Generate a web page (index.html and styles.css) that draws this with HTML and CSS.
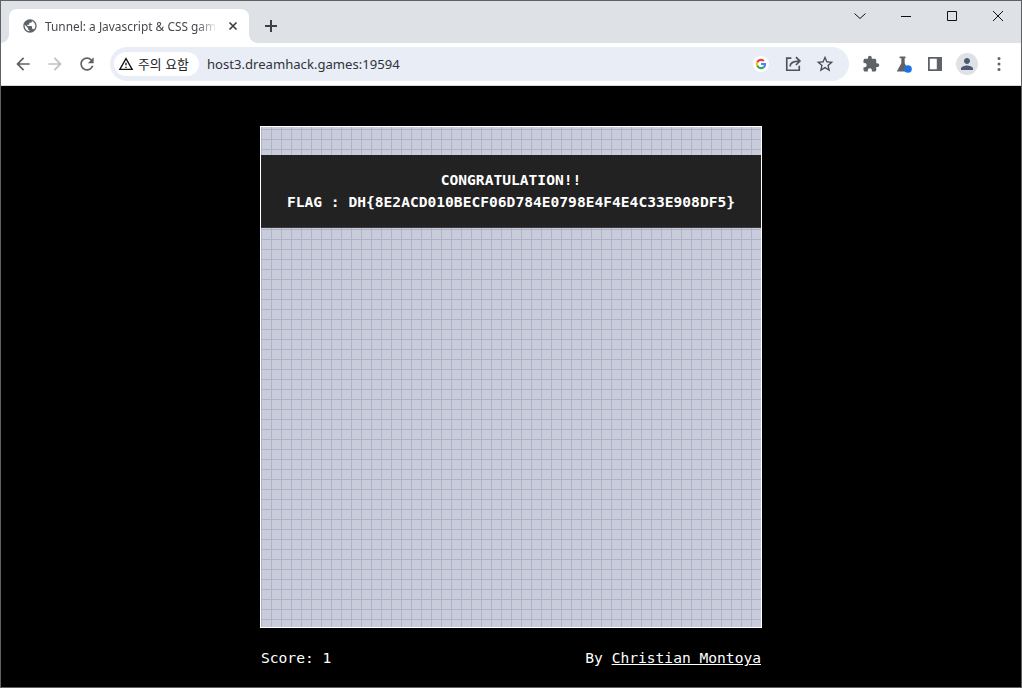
FILE: index.html
```html
<!DOCTYPE html>
<html lang="ko">
<head>
<meta charset="utf-8">
<title>Tunnel: a Javascript &amp; CSS game</title>
<link rel="stylesheet" href="styles.css">
</head>
<body>
<div class="window">
  <header class="tabstrip">
    <div class="tab">
      <svg class="tab-favicon" viewBox="0 0 24 24"><path d="M12 2C6.48 2 2 6.48 2 12s4.48 10 10 10 10-4.48 10-10S17.52 2 12 2zm-1 17.93c-3.95-.49-7-3.85-7-7.93 0-.62.08-1.21.21-1.79L9 15v1c0 1.1.9 2 2 2v1.93zm6.9-2.54c-.26-.81-1-1.39-1.9-1.39h-1v-3c0-.55-.45-1-1-1H8v-2h2c.55 0 1-.45 1-1V7h2c1.1 0 2-.9 2-2v-.41c2.93 1.19 5 4.06 5 7.41 0 2.08-.8 3.97-2.1 5.39z"/></svg>
      <span class="tab-title">Tunnel: a Javascript &amp; CSS gam</span>
      <svg class="tab-close" viewBox="0 0 10 10"><path d="M1.5 1.5l7 7M8.5 1.5l-7 7"/></svg>
    </div>
    <svg class="new-tab" viewBox="0 0 14 14"><path d="M7 1v12M1 7h12"/></svg>
    <div class="window-controls">
      <div class="win-btn"><svg viewBox="0 0 12 12"><path d="M.5 3.5L6 8.5l5.500-5"/></svg></div>
      <div class="win-btn"><svg viewBox="0 0 12 12"><path d="M1 6.500h10"/></svg></div>
      <div class="win-btn"><svg viewBox="0 0 12 12"><path d="M1.500 1.500h9v9h-9z"/></svg></div>
      <div class="win-btn"><svg viewBox="0 0 12 12"><path d="M1 1l10 10M11 1L1 11"/></svg></div>
    </div>
  </header>
  <nav class="toolbar">
    <div class="tool"><svg viewBox="0 0 24 24"><path d="M20 11H7.830l5.590-5.590L12 4l-8 8 8 8 1.410-1.410L7.830 13H20v-2z"/></svg></div>
    <div class="tool tool-off"><svg viewBox="0 0 24 24"><path d="M12 4l-1.410 1.410L16.170 11H4v2h12.170l-5.580 5.590L12 20l8-8z"/></svg></div>
    <div class="tool"><svg viewBox="0 0 24 24"><path d="M17.650 6.350C16.200 4.900 14.210 4 12 4c-4.420 0-7.990 3.580-7.990 8s3.570 8 7.990 8c3.730 0 6.840-2.550 7.730-6h-2.080c-.82 2.330-3.040 4-5.650 4-3.310 0-6-2.690-6-6s2.690-6 6-6c1.660 0 3.140.69 4.220 1.780L13 11h7V4l-2.350 2.350z"/></svg></div>
    <div class="omnibox">
      <div class="chip">
        <svg class="chip-icon" viewBox="0 0 24 24"><path d="M12 5.990L19.530 19H4.470L12 5.990M12 2L1 21h22L12 2zm1 14h-2v2h2v-2zm0-6h-2v4h2v-4z"/></svg>
        <span>주의 요함</span>
      </div>
      <span class="url">host3.dreamhack.games:19594</span>
      <div class="omni-icons">
        <div class="tool"><div class="google-badge"><svg class="google" viewBox="0 0 24 24">
          <path fill="#ea4335" d="M12 5.800c1.600 0 3 .55 4.150 1.600l3-3C17.300 2.700 14.900 1.700 12 1.700 8 1.700 4.500 4 2.800 7.400l3.500 2.700C7.100 7.600 9.300 5.800 12 5.800z"/>
          <path fill="#4285f4" d="M22.100 12.300c0-.8-.1-1.500-.2-2.200H12v4.100h5.700c-.25 1.300-1 2.500-2.100 3.200l3.400 2.600c2-1.800 3.100-4.500 3.100-7.700z"/>
          <path fill="#fbbc05" d="M6.300 13.900c-.4-1.200-.4-2.600 0-3.800L2.800 7.400c-1.500 3-1.500 6.200 0 9.200l3.500-2.700z"/>
          <path fill="#34a853" d="M12 22.300c2.800 0 5.100-.9 7-2.500l-3.400-2.600c-1 .7-2.200 1-3.600 1-2.700 0-4.900-1.800-5.700-4.300l-3.500 2.700C4.500 20 8 22.300 12 22.300z"/>
        </svg></div></div>
        <div class="tool"><svg class="line-icon" viewBox="0 0 24 24"><path d="M10 5H4.500v14.500h15V14"/><path d="M8.500 15c0-4.500 3-6.500 11-6.500M15.500 3.800l4.800 4.700-4.800 4.700"/></svg></div>
        <div class="tool tool-dark"><svg viewBox="0 0 24 24"><path d="M22 9.240l-7.190-.62L12 2 9.190 8.630 2 9.240l5.460 4.730L5.820 21 12 17.270 18.180 21l-1.630-7.030L22 9.240zM12 15.400l-3.760 2.270 1-4.280-3.320-2.880 4.380-.38L12 6.100l1.710 4.040 4.380.38-3.320 2.880 1 4.280L12 15.400z"/></svg></div>
      </div>
    </div>
    <div class="toolbar-end">
      <div class="tool"><svg class="ext" viewBox="0 0 24 24"><path d="M20.500 11H19V7c0-1.100-.9-2-2-2h-4V3.500C13 2.120 11.880 1 10.500 1S8 2.120 8 3.500V5H4c-1.100 0-1.990.9-1.990 2v3.800H3.500c1.490 0 2.700 1.210 2.700 2.700s-1.210 2.700-2.700 2.700H2V20c0 1.100.9 2 2 2h3.800v-1.500c0-1.490 1.210-2.700 2.700-2.700 1.490 0 2.700 1.210 2.700 2.700V22H17c1.100 0 2-.9 2-2v-4h1.500c1.380 0 2.500-1.120 2.500-2.500S21.880 11 20.500 11z"/></svg></div>
      <div class="tool"><svg viewBox="0 0 24 24"><path d="M8 3h7v2h-1v6l5.500 10H4.500L10 11V5H8z"/><circle class="lab-dot" cx="18" cy="18" r="4.600"/></svg></div>
      <div class="tool"><svg class="panel" viewBox="0 0 16 16"><path fill-rule="evenodd" d="M1 1h14v14H1zM2.800 2.800v10.400h7V2.800z"/></svg></div>
      <div class="tool"><div class="avatar"><svg viewBox="0 0 24 24"><path d="M12 12c2.210 0 4-1.790 4-4s-1.790-4-4-4-4 1.790-4 4 1.790 4 4 4zm0 2c-2.670 0-8 1.340-8 4v2h16v-2c0-2.660-5.330-4-8-4z"/></svg></div></div>
      <div class="tool"><svg class="menu" viewBox="0 0 4 16"><circle cx="2" cy="2.500" r="1.500"/><circle cx="2" cy="8" r="1.500"/><circle cx="2" cy="13.500" r="1.500"/></svg></div>
    </div>
  </nav>
  <main class="page">
    <section class="game">
      <div class="banner">
        <div>CONGRATULATION!!</div>
        <div>FLAG : DH{8E2ACD010BECF06D784E0798E4F4E4C33E908DF5}</div>
      </div>
    </section>
    <footer class="game-footer">
      <span>Score: 1</span>
      <span>By <a href="#">Christian Montoya</a></span>
    </footer>
  </main>
</div>
</body>
</html>
```
FILE: styles.css
```css
* { box-sizing: border-box; }
html, body { margin: 0; height: 100%; background: #000; }
.window {
  width: 1022px; height: 688px; overflow: hidden;
  border: 1px solid #5f6163;
  display: flex; flex-direction: column;
  background: #000;
}
svg { display: block; }

/* tab strip */
.tabstrip {
  height: 42px; flex: none; background: #dee1e6;
  display: flex; align-items: flex-end;
  padding-left: 8px;
}
.tab {
  position: relative;
  width: 240px; height: 34px;
  background: #fff; border-radius: 8px 8px 0 0;
  display: flex; align-items: center; padding-left: 13px;
}
.tab::before, .tab::after {
  content: ""; position: absolute; bottom: 0; width: 8px; height: 8px;
}
.tab::before { left: -8px; background: radial-gradient(circle at 0 0, #dee1e6 7.5px, #fff 8px); }
.tab::after { right: -8px; background: radial-gradient(circle at 100% 0, #dee1e6 7.5px, #fff 8px); }
.tab-favicon { width: 16px; height: 16px; fill: #5f6368; flex: none; }
.tab-title {
  margin-left: 7px; width: 172px; flex: none; overflow: hidden; white-space: nowrap;
  font: 11.9px/16px "Noto Sans", sans-serif; color: #45494e;
  -webkit-mask-image: linear-gradient(90deg, #000 152px, transparent 172px);
  mask-image: linear-gradient(90deg, #000 152px, transparent 172px);
}
.tab-close { width: 10px; height: 10px; margin-left: 11px; fill: none; stroke: #3c4043; stroke-width: 1.7; flex: none; }
.new-tab { width: 14px; height: 14px; margin: 0 0 10px 15px; fill: none; stroke: #3c4043; stroke-width: 2; flex: none; }
.window-controls { margin-left: auto; display: flex; align-self: flex-start; }
.win-btn { width: 46px; height: 30px; display: flex; align-items: center; justify-content: center; }
.win-btn svg { width: 12px; height: 12px; fill: none; stroke: #111; stroke-width: 1; }

/* toolbar */
.toolbar {
  height: 43px; flex: none; background: #fff;
  border-bottom: 1px solid #d6d8dc;
  display: flex; align-items: center;
  padding: 0 6px 1px;
}
.tool { width: 32px; height: 32px; flex: none; display: flex; align-items: center; justify-content: center; }
.tool svg { width: 20px; height: 20px; fill: #5f6368; }
.tool-off svg { fill: #bdc1c6; }
.tool-dark svg { fill: #4a4d51; }
.omnibox {
  width: 739px; height: 34px; margin-left: 7px; flex: none;
  background: #e9edf6; border-radius: 17px;
  display: flex; align-items: center; padding: 0 8px 0 4px;
}
.chip {
  height: 24px; width: 85px; background: #fff; border-radius: 12px; flex: none;
  display: flex; align-items: center; padding-left: 4px; gap: 4px;
  font: 12.8px/16px "Noto Sans CJK KR", sans-serif; color: #202124;
}
.chip-icon { width: 16px; height: 16px; fill: #111; flex: none; }
.url {
  margin-left: 8px;
  font: 13.1px/18px "Noto Sans", sans-serif; color: #303338; white-space: nowrap;
}
.omni-icons { margin-left: auto; display: flex; }
.google-badge {
  width: 16px; height: 16px; border-radius: 50%; background: #fff;
  display: flex; align-items: center; justify-content: center;
}
.tool svg.google { width: 12px; height: 12px; }
.tool svg.line-icon { fill: none; stroke: #4f5256; stroke-width: 2; }
.toolbar-end { margin-left: 6px; display: flex; }
.tool svg.ext { width: 18px; height: 18px; }
.lab-dot { fill: #1a73e8; }
.tool svg.panel { width: 16px; height: 16px; }
.avatar {
  width: 22px; height: 22px; border-radius: 50%; background: #dee1e6;
  display: flex; align-items: center; justify-content: center;
}
.tool .avatar svg { width: 18px; height: 18px; fill: #4c5a70; }
.tool svg.menu { width: 4px; height: 16px; }

/* page */
.page {
  flex: 1; background: #000; padding-top: 40px;
  display: flex; flex-direction: column; align-items: center;
  font-family: "DejaVu Sans Mono", monospace; color: #fff;
  font-size: 14.6px;
}
.game {
  position: relative; width: 502px; height: 502px; flex: none;
  border: 1px solid #fff;
  background-color: #c8ccdb;
  background-image:
    linear-gradient(#aeb3c7 1px, transparent 1px),
    linear-gradient(90deg, #aeb3c7 1px, transparent 1px);
  background-size: 10px 10px;
  background-position: 0 2px, 0 0;
}
.banner {
  position: absolute; top: 28px; left: 0; right: 0; height: 73px;
  background: #222; color: #fff; font-weight: bold; text-align: center;
  padding-top: 14px; line-height: 22px;
  border-bottom: 1px solid #3a3a3a;
}
.game-footer {
  width: 500px; margin-top: 20px; line-height: 20px;
  display: flex; justify-content: space-between;
}
.game-footer a { color: #fff; text-decoration: underline; }
```
